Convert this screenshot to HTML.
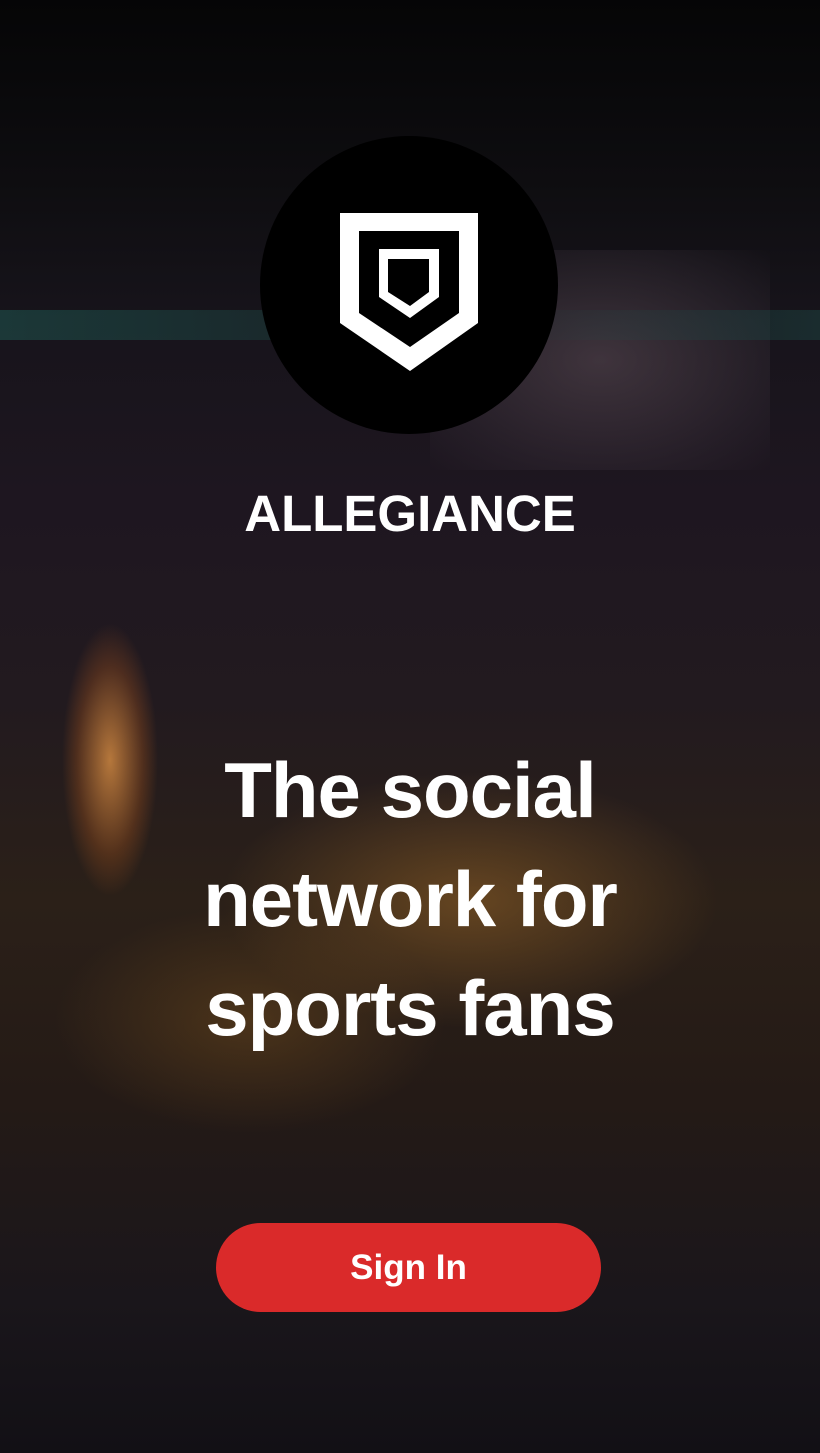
<!DOCTYPE html>
<html><head><meta charset="utf-8"><style>
html,body{margin:0;padding:0}
body{width:820px;height:1453px;position:relative;overflow:hidden;background:#0c0a0c;font-family:"Liberation Sans",sans-serif;color:#fff}
.bg{position:absolute;inset:0;
background:
radial-gradient(ellipse 60px 170px at 110px 760px,rgba(230,150,70,.75),rgba(180,90,30,.3) 55%,transparent 80%),
radial-gradient(ellipse 330px 170px at 470px 900px,rgba(150,100,40,.55),transparent 75%),
radial-gradient(ellipse 260px 150px at 250px 1020px,rgba(120,80,30,.45),transparent 75%),
linear-gradient(180deg,#050506 0,#0e0d10 180px,#17141b 320px,#1e1620 500px,#221a1f 700px,#2b2018 900px,#241a16 1100px,#1a161b 1300px,#121015 1453px);}
.screen{position:absolute;left:430px;top:250px;width:340px;height:220px;background:radial-gradient(ellipse at 50% 50%,rgba(110,90,100,.45),rgba(60,50,60,.3) 70%,transparent 100%)}
.band{position:absolute;left:0;width:820px;top:310px;height:30px;background:linear-gradient(90deg,rgba(30,80,75,.6),rgba(30,80,75,.3) 40%,transparent 60%,rgba(30,80,75,.4))}
.circle{position:absolute;left:260px;top:136px;width:298px;height:298px;border-radius:50%;background:#000}
.title{position:absolute;top:484px;left:0;width:820px;text-align:center;font-size:51px;font-weight:bold}
.head{position:absolute;top:736px;left:0;width:820px;text-align:center;font-size:78px;font-weight:bold;line-height:109px;letter-spacing:-1px}
.btn{position:absolute;left:216px;top:1223px;width:385px;height:89px;border-radius:45px;background:#da2a2a;text-align:center;line-height:89px;font-size:35px;font-weight:bold}
</style></head><body>
<div class="bg"></div><div class="screen"></div><div class="band"></div>
<div class="circle"></div>
<svg style="position:absolute;left:0;top:0" width="820" height="450">
<path fill="#fff" fill-rule="evenodd" d="M340 213H478V323L410 371L340 323Z M359 231V313L410 347L459 313V231Z M379 249H439V297L410 318L379 297Z M388 259V292L410 306L429 292V259Z"/>
</svg>
<div class="title">ALLEGIANCE</div>
<div class="head">The social<br>network for<br>sports fans</div>
<div class="btn">Sign In</div>
</body></html>
